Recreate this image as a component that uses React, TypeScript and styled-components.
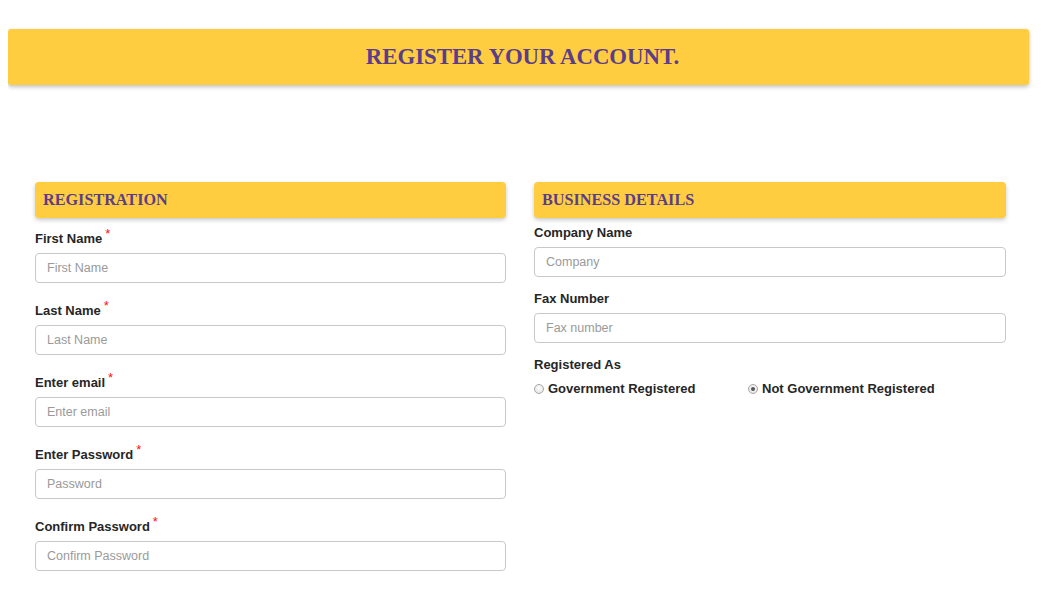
import React from "react";
import styled, { createGlobalStyle } from "styled-components";

const GlobalStyle = createGlobalStyle`
  body {
    margin: 8px;
    background: #ffffff;
    font-family: "Liberation Sans", Arial, sans-serif;
  }
`;

const Page = styled.div`
  width: 1021px;
  padding-top: 21px;
`;

const Banner = styled.div`
  height: 56px;
  padding-left: 8px;
  background-color: #ffcd3f;
  border-radius: 3px;
  box-shadow: rgba(0, 0, 0, 0.25) 0px 2px 4px;
  display: flex;
  justify-content: center;
  align-items: center;
`;

const BannerTitle = styled.h1`
  margin: 0;
  font-family: "Liberation Serif", "Times New Roman", serif;
  font-size: 22.8px;
  font-weight: bold;
  color: #5b3d8a;
`;

const Columns = styled.div`
  display: grid;
  grid-template-columns: 471px 472px;
  column-gap: 28px;
  padding: 97px 0 0 27px;
`;

const Column = styled.div`
  display: flex;
  flex-direction: column;
`;

const SectionHeader = styled.div`
  height: 36px;
  background-color: #ffcd3f;
  border-radius: 4px;
  box-shadow: rgba(0, 0, 0, 0.22) 0px 2px 4px;
  display: flex;
  align-items: center;
  padding: 0 8px;
  margin-bottom: 7px;
`;

const SectionTitle = styled.h2`
  margin: 0;
  font-family: "Liberation Serif", "Times New Roman", serif;
  font-size: 16.2px;
  font-weight: bold;
  color: #5b3d8a;
`;

const Field = styled.div<{ $gap: number }>`
  display: flex;
  flex-direction: column;
  margin-bottom: ${(p) => p.$gap}px;
`;

const Label = styled.label<{ $required?: boolean }>`
  display: block;
  font-size: 13px;
  font-weight: bold;
  line-height: 15px;
  color: #262626;
  padding-top: ${(p) => (p.$required ? 6 : 0)}px;
  margin-bottom: 7px;
`;

const Star = styled.span`
  position: relative;
  top: -5px;
  margin-left: 3px;
  font-size: 13px;
  line-height: 0;
  color: #ff1010;
  font-weight: normal;
`;

const Input = styled.input`
  box-sizing: border-box;
  width: 100%;
  height: 30px;
  padding: 0 11px;
  border: 1px solid #c8c8c8;
  border-radius: 4px;
  font-family: "Liberation Sans", Arial, sans-serif;
  font-size: 12.5px;
  color: #333;
  outline: none;

  &::placeholder {
    color: #9a9a9a;
  }
`;

const RadioRow = styled.div`
  display: flex;
  align-items: center;
  margin-top: 2px;
`;

const RadioOption = styled.label<{ $width?: number }>`
  display: flex;
  align-items: center;
  gap: 4px;
  width: ${(p) => (p.$width ? `${p.$width}px` : "auto")};
  font-size: 13px;
  font-weight: bold;
  color: #262626;
`;

const Radio = styled.input.attrs({ type: "radio" })`
  appearance: none;
  margin: 0;
  width: 10px;
  height: 10px;
  border-radius: 50%;
  border: 1px solid #a8a8a8;
  background: radial-gradient(circle at 50% 40%, #ffffff, #dcdcdc);
  display: grid;
  place-content: center;

  &:checked::before {
    content: "";
    width: 4px;
    height: 4px;
    border-radius: 50%;
    background: #555;
  }
`;

const leftFields = [
  { label: "First Name", placeholder: "First Name", type: "text" },
  { label: "Last Name", placeholder: "Last Name", type: "text" },
  { label: "Enter email", placeholder: "Enter email", type: "email" },
  { label: "Enter Password", placeholder: "Password", type: "password" },
  { label: "Confirm Password", placeholder: "Confirm Password", type: "password" },
];

const rightFields = [
  { label: "Company Name", placeholder: "Company" },
  { label: "Fax Number", placeholder: "Fax number" },
];

export default function App() {
  return (
    <>
      <GlobalStyle />
      <Page>
        <Banner>
          <BannerTitle>REGISTER YOUR ACCOUNT.</BannerTitle>
        </Banner>
        <Columns>
          <Column>
            <SectionHeader>
              <SectionTitle>REGISTRATION</SectionTitle>
            </SectionHeader>
            {leftFields.map((f) => (
              <Field key={f.label} $gap={14}>
                <Label $required>
                  {f.label}
                  <Star>*</Star>
                </Label>
                <Input type={f.type} placeholder={f.placeholder} />
              </Field>
            ))}
          </Column>
          <Column>
            <SectionHeader>
              <SectionTitle>BUSINESS DETAILS</SectionTitle>
            </SectionHeader>
            {rightFields.map((f) => (
              <Field key={f.label} $gap={14}>
                <Label>{f.label}</Label>
                <Input type="text" placeholder={f.placeholder} />
              </Field>
            ))}
            <Field $gap={0}>
              <Label>Registered As</Label>
              <RadioRow>
                <RadioOption $width={214}>
                  <Radio name="registered" />
                  Government Registered
                </RadioOption>
                <RadioOption>
                  <Radio name="registered" defaultChecked />
                  Not Government Registered
                </RadioOption>
              </RadioRow>
            </Field>
          </Column>
        </Columns>
      </Page>
    </>
  );
}
